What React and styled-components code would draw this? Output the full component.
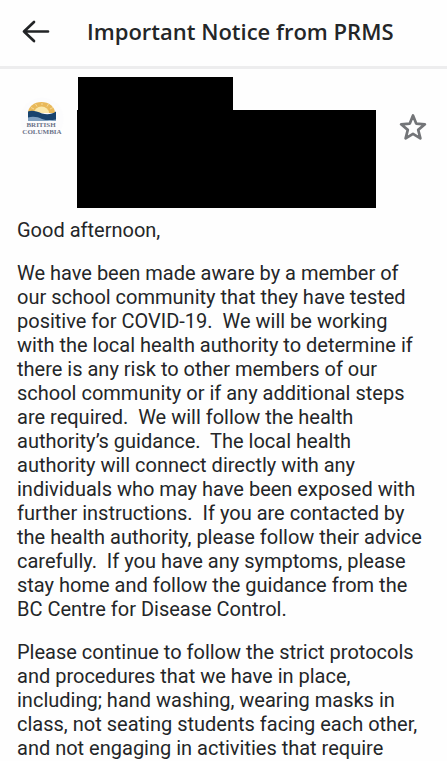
import React from "react";
import styled, { createGlobalStyle } from "styled-components";

const GlobalStyle = createGlobalStyle`
  * { box-sizing: border-box; }
  body {
    margin: 0;
    background: #fefefe;
    color: #242628;
    font-family: Roboto, "Liberation Sans", sans-serif;
    overflow-x: hidden;
  }
`;

const Screen = styled.main`
  display: flex;
  flex-direction: column;
  height: 100vh;
  overflow: hidden;
`;

const Header = styled.header`
  display: flex;
  flex: none;
  align-items: center;
  gap: 31px;
  height: 69px;
  padding: 0 16px 4px;
  border-bottom: 3px solid #ededee;
`;

const IconButton = styled.button`
  display: flex;
  flex: none;
  align-items: center;
  justify-content: center;
  width: 40px;
  height: 40px;
  padding: 0;
  border: 0;
  background: none;
  color: ${({ $color }) => $color};
`;

const Title = styled.h1`
  margin: 0;
  font-family: "Open Sans", "Noto Sans", sans-serif;
  font-size: 22px;
  font-weight: 600;
  line-height: 32px;
  white-space: nowrap;
`;

const SenderRow = styled.section`
  display: flex;
  flex: none;
  align-items: flex-start;
  padding: 8px 14px 0 20px;
`;

const Avatar = styled.div`
  display: flex;
  flex: none;
  width: 57px;
  padding-top: 20px;
`;

const Redaction = styled.div`
  flex: 1;
`;

const RedactedName = styled.div`
  width: 52%;
  height: 33px;
  margin-left: 1px;
  background: #000;
`;

const RedactedDetails = styled.div`
  height: 98px;
  background: #000;
`;

const StarSlot = styled.div`
  flex: none;
  margin-left: 17px;
  padding-top: 30px;
`;

const Body = styled.article`
  display: flex;
  flex-direction: column;
  gap: 19px;
  padding: 10px 22px 0 17px;
  font-size: 20px;
  line-height: 24px;
`;

const Paragraph = styled.p`
  margin: 0;
  white-space: pre-wrap;
`;

const ArrowIcon = () => (
  <svg width="40" height="40" viewBox="0 0 40 40" fill="none" stroke="currentColor" strokeWidth="2.7" strokeLinecap="round" strokeLinejoin="round" aria-hidden="true">
    <path d="M32 20.5H8M18 11L8 20.5l10 9.5" />
  </svg>
);

const StarIcon = () => (
  <svg width="40" height="40" viewBox="0 0 40 40" fill="none" stroke="currentColor" strokeWidth="2.7" strokeLinejoin="round" aria-hidden="true">
    <path d="M20 8.5L23.2 16.6L31.9 17.3L25.2 22.9L27.4 31.4L20 26.8L12.6 31.4L14.8 22.9L8.1 17.3L16.8 16.6Z" />
  </svg>
);

const BritishColumbiaLogo = () => (
  <svg width="44" height="44" viewBox="0 0 44 44" role="img" aria-label="British Columbia">
    <circle cx="22" cy="22" r="21.5" fill="#fcfcfd" />
    <path d="M8 16A13.5 11 0 0 1 35 16Z" fill="#e9b95a" />
    <path d="M14 16A7.5 6.5 0 0 1 29 16Z" fill="#fbe9ad" />
    <g stroke="#f8e0a8" strokeWidth="0.8">
      <path d="M22 8V6M17 9.5L15.5 7M27 9.5L28.5 7M14 12L11 10.5M30 12L33 10.5" />
    </g>
    <path d="M8 14.5C12 13 16 14 22 16.5C28 18 32 17 36 14.5V23H8Z" fill="#18436d" />
    <path d="M8 20.5C13 19 18 20 22 22C26 23.5 31 23.5 36 22.5V24H8Z" fill="#7fa0c0" />
    <g fontFamily="Liberation Serif, serif" fontSize="7" fontWeight="700" fill="#6b7288" textAnchor="middle">
      <text x="21" y="30">BRITISH</text>
      <text x="22" y="37">COLUMBIA</text>
    </g>
  </svg>
);

const paragraphs = [
  "Good afternoon,",
  "We have been made aware by a member of our school community that they have tested positive for COVID-19.  We will be working with the local health authority to determine if there is any risk to other members of our school community or if any additional steps are required.  We will follow the health authority’s guidance.  The local health authority will connect directly with any individuals who may have been exposed with further instructions.  If you are contacted by the health authority, please follow their advice carefully.  If you have any symptoms, please stay home and follow the guidance from the BC Centre for Disease Control.",
  "Please continue to follow the strict protocols and procedures that we have in place, including; hand washing, wearing masks in class, not seating students facing each other, and not engaging in activities that require",
];

export default function App() {
  return (
    <>
      <GlobalStyle />
      <Screen>
        <Header>
          <IconButton type="button" aria-label="Back" $color="#222426">
            <ArrowIcon />
          </IconButton>
          <Title>Important Notice from PRMS</Title>
        </Header>
        <SenderRow>
          <Avatar>
            <BritishColumbiaLogo />
          </Avatar>
          <Redaction>
            <RedactedName />
            <RedactedDetails />
          </Redaction>
          <StarSlot>
            <IconButton type="button" aria-label="Star message" $color="#737578">
              <StarIcon />
            </IconButton>
          </StarSlot>
        </SenderRow>
        <Body>
          {paragraphs.map((text) => (
            <Paragraph key={text}>{text}</Paragraph>
          ))}
        </Body>
      </Screen>
    </>
  );
}
